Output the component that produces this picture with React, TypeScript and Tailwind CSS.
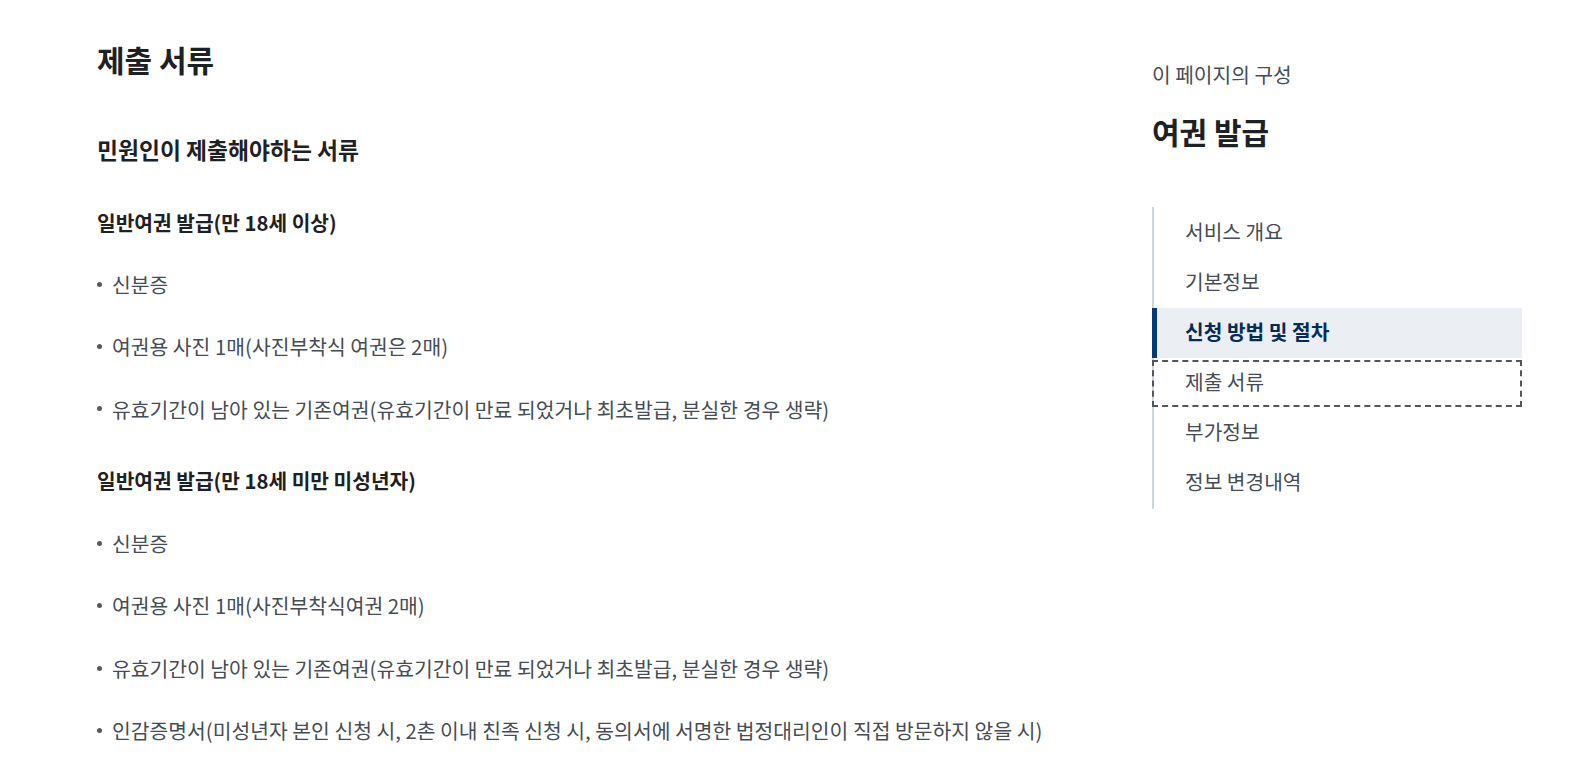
import React from "react";

const font = { fontFamily: '"Noto Sans CJK KR", "Noto Sans", sans-serif' };

function Bullet({ children }: { children: React.ReactNode }) {
  return (
    <li className="flex items-center h-[62.4px] text-[20.4px] text-[#464c53]">
      <span className="w-[5px] h-[5px] rounded-full bg-[#555a60] mr-[10px] shrink-0" />
      <span>{children}</span>
    </li>
  );
}

export default function App() {
  const nav = ["서비스 개요", "기본정보", "신청 방법 및 절차", "제출 서류", "부가정보", "정보 변경내역"];
  return (
    <div style={font} className="w-[1578px] h-[772px] bg-white overflow-hidden flex">
      <main className="pl-[97px] w-[1152px] shrink-0">
        <h1 className="text-[30px] font-bold text-[#1e2124] leading-[40px] mt-[39px]">제출 서류</h1>
        <h2 className="text-[22.8px] font-bold text-[#1e2124] leading-[32px] mt-[55px]">민원인이 제출해야하는 서류</h2>
        <h3 className="text-[20.3px] font-bold text-[#1e2124] leading-[28px] mt-[42px]">일반여권 발급(만 18세 이상)</h3>
        <ul className="mt-[17px]">
          <Bullet>신분증</Bullet>
          <Bullet>여권용 사진 1매(사진부착식 여권은 2매)</Bullet>
          <Bullet>유효기간이 남아 있는 기존여권(유효기간이 만료 되었거나 최초발급, 분실한 경우 생략)</Bullet>
        </ul>
        <h3 className="text-[20.3px] font-bold text-[#1e2124] leading-[28px] mt-[26px]">일반여권 발급(만 18세 미만 미성년자)</h3>
        <ul className="mt-[18px]">
          <Bullet>신분증</Bullet>
          <Bullet>여권용 사진 1매(사진부착식여권 2매)</Bullet>
          <Bullet>유효기간이 남아 있는 기존여권(유효기간이 만료 되었거나 최초발급, 분실한 경우 생략)</Bullet>
          <Bullet>인감증명서(미성년자 본인 신청 시, 2촌 이내 친족 신청 시, 동의서에 서명한 법정대리인이 직접 방문하지 않을 시)</Bullet>
        </ul>
      </main>
      <aside className="w-[370px] shrink-0">
        <p className="text-[20.3px] text-[#464c53] leading-[26px] mt-[61px]">이 페이지의 구성</p>
        <p className="text-[30px] font-bold text-[#1e2124] leading-[40px] mt-[24px]">여권 발급</p>
        <ul className="mt-[56px] border-l-2 border-[#cdd5df] py-[1px]">
          {nav.map((n, i) => {
            const active = i === 2;
            const focus = i === 3;
            return (
              <li
                key={n}
                className={
                  "relative h-[50px] flex items-center pl-[31px] pb-[4px] text-[20.3px] " +
                  (active ? "bg-[#ebeff4] text-[#052b57] font-bold" : "text-[#464c53]")
                }
              >
                {active && <span className="absolute left-[-2px] top-0 bottom-0 w-[5px] bg-[#063a74]" />}
                {focus && (
                  <span className="absolute left-[-2px] right-0 top-[2px] bottom-[1px] border-2 border-dashed border-[#555]" />
                )}
                {n}
              </li>
            );
          })}
        </ul>
      </aside>
    </div>
  );
}
